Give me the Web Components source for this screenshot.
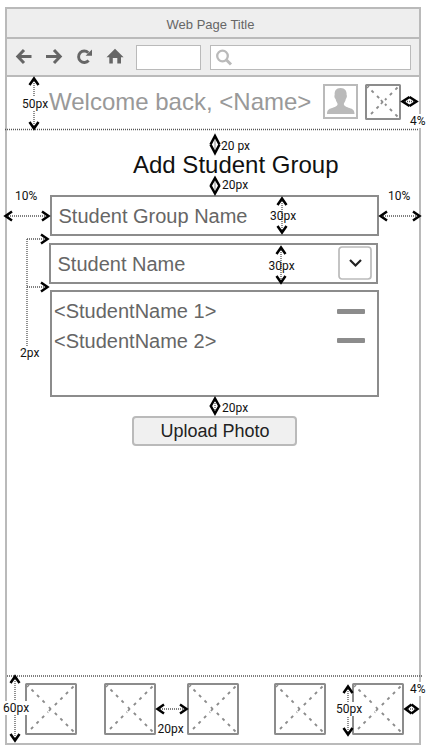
<!DOCTYPE html>
<html lang="en"><head><meta charset="utf-8"><title>Web Page Title</title>
<style>html,body{margin:0;background:#fff;width:428px;height:753px;overflow:hidden}body{position:relative;font-family:"Liberation Sans",Arial,sans-serif}</style>
</head><body>
<browser-frame page="Web Page Title">
<welcome-bar>Welcome back, &lt;Name&gt;</welcome-bar>
<group-form></group-form>
<bottom-nav></bottom-nav>
</browser-frame>
<measure-layer></measure-layer>
<script>
class Base extends HTMLElement{
  connectedCallback(){ if(!this.shadowRoot) this.attachShadow({mode:'open'}).innerHTML=this.render(); }
}
customElements.define('browser-frame',class extends Base{render(){return `<style>
:host{display:flex;flex-direction:column;box-sizing:border-box;width:416px;height:738px;margin:7px 0 0 5px;border:2px solid #bababa;background:#fff}
.title{flex:none;background:#eee;border-bottom:2px solid #bababa;display:flex;align-items:center;justify-content:center;font-size:13px;color:#666;padding:2px 5px 0 0;box-sizing:border-box;height:30px}
.bar{box-sizing:border-box;height:38px;flex:none;background:#eee;border-bottom:2px solid #bababa;display:flex;align-items:center;padding:0 8px}
.bar>svg{flex:none}
.in{box-sizing:border-box;height:25px;border:1px solid #bababa;background:#fff;flex:none}
.a{width:65px;margin:0 9px 0 9px}.b{width:201px}
.b svg{display:block}
</style><div class="title">${this.getAttribute('page')}</div>
<div class="bar"><svg width="112" height="24" viewBox="15 44.500 112 24" fill="none" stroke="#666" stroke-width="3">
<path d="M18 56H31.500M24 49.500L17.800 56L24 62.500M46 56H60M54 49.500L60.200 56L54 62.500"/>
<path d="M88.300 52.200A5.700 5.700 0 1 0 88.600 60" stroke-width="2.900"/><path d="M92 49V55.200H85.600Z" fill="#666" stroke="none"/>
<path d="M115 48.200L123.600 56.700H121V63H117.300V57.500H112.800V63H109.300V56.700H106.500Z" fill="#666" stroke="none"/></svg>
<div class="in a"></div><div class="in b"><svg width="24" height="23" viewBox="211 46 24 23" fill="none" stroke="#bababa"><circle cx="222.500" cy="56" r="5.300" stroke-width="2.300"/><path d="M226.500 60L231 64.500" stroke-width="3"/></svg></div></div><slot></slot>`}});
customElements.define('image-box',class extends Base{render(){const n=+this.getAttribute('size'),c=n/2;return `<style>:host{display:block;flex:none;width:${n}px;height:${n}px}svg{display:block}</style>
<svg width="${n}" height="${n}" fill="none" stroke="#8c8c8c"><rect x="1" y="1" width="${n-2}" height="${n-2}" rx=".5" stroke-width="2"/><path d="M2 4L4 2" stroke-width="1.500"/>
<path d="M6.500 6.500L${c-3} ${c-3}M${n-3.500} 3.500L${c+2} ${c-2}M${n-3.500} ${n-3.500}L${c+2} ${c+2}M6 ${n-6}L${c-3} ${c+3}" stroke-width="1.900" stroke-dasharray="3 4.800"/><path d="M${c-2} ${c-2}L${c-.5} ${c}L${c-2} ${c+2}" stroke-width="1.800"/></svg>`}});
customElements.define('user-avatar',class extends Base{render(){return `<style>:host{display:block;width:35px;height:35px;flex:none}svg{display:block}</style><svg width="35" height="35"><rect x="1" y="1" width="33" height="33" fill="#fff" stroke="#bababa" stroke-width="2"/><path d="M17.500 4C22 4 24 7 23.600 11C24.500 11.500 23.500 14.500 22.800 15C22.500 17.500 21 18.500 20.800 20C21 22.500 24 23 26.500 24C30 25 31.500 26.500 31.500 30H4C4 26.500 5.500 25 9 24C11.500 23 14.500 22.500 14.600 20C14.400 18.500 13 17.500 12.600 15C11.500 14.500 11 11.500 11.700 11C11.300 7 13 4 17.500 4Z" fill="#bababa"/></svg>`}});
customElements.define('welcome-bar',class extends Base{render(){return `<style>:host{display:flex;flex:none;box-sizing:border-box;height:53px;padding:7px 18px 0 42px;align-items:flex-start}
.t{font-size:24px;line-height:36px;color:#999;white-space:nowrap;width:274px;flex:none}user-avatar{margin-right:7px}</style><div class="t"><slot></slot></div><user-avatar></user-avatar><image-box size="36"></image-box>`}});
customElements.define('text-field',class extends Base{render(){return `<style>:host{display:flex;box-sizing:border-box;align-items:center;width:329px;height:41px;border:2px solid #8c8c8c;padding:1px 4px 0 6.500px;font-size:20px;color:#666;justify-content:space-between;background:#fff}</style><span><slot></slot></span><slot name="end"></slot>`}});
customElements.define('drop-button',class extends Base{render(){return `<style>:host{display:block;width:34px;height:34px;margin-top:-3px}svg{display:block}</style><svg width="34" height="34" fill="none"><rect x="1" y="1" width="32" height="32" rx="3" stroke="#bababa" stroke-width="1.700"/><path d="M12 14L17.500 19.500L23 14" stroke="#222" stroke-width="2.200"/></svg>`}});
customElements.define('student-row',class extends Base{render(){return `<style>:host{display:flex;justify-content:space-between;align-items:center;height:29.500px;font-size:20px;color:#666}i{display:block;width:28px;height:5px;border-radius:1px;background:#8c8c8c}:host(:last-child) i{margin-top:-2px}</style><span><slot></slot></span><i></i>`}});
customElements.define('group-form',class extends Base{render(){return `<style>:host{display:flex;flex-direction:column;flex:1;padding-left:43px;align-items:flex-start}
h1{margin:23px 0 18px 83px;font-size:24px;line-height:24px;font-weight:400;color:#111;height:24px}
.second{margin:7px 0 6px -1px}
.list{box-sizing:border-box;width:329px;height:107px;border:2px solid #8c8c8c;padding:5px 12px 0 2px}
button{box-sizing:border-box;width:165px;height:30px;margin:19px 0 0 82px;border:2px solid #bababa;border-radius:4px;background:#f0f0f0;font:18px "Liberation Sans",Arial,sans-serif;color:#222;padding:0 0 0 1px;white-space:nowrap}</style>
<h1>Add Student Group</h1><text-field>Student Group Name</text-field><text-field class="second">Student Name<drop-button slot="end"></drop-button></text-field>
<div class="list"><student-row>&lt;StudentName 1&gt;</student-row><student-row>&lt;StudentName 2&gt;</student-row></div><button>Upload Photo</button>`}});
customElements.define('bottom-nav',class extends Base{render(){return `<style>:host{display:grid;grid-template-columns:79px 83px 87px 78px 52px;box-sizing:border-box;height:60px;flex:none;padding-left:18px}</style>${'<image-box size="52"></image-box>'.repeat(5)}`}});
/* Spacing annotations drawn over the page: dotted rules, arrows and their labels. */
customElements.define('measure-layer',class extends Base{render(){
 const head=(x,y,dx,dy,l=8)=>{const bx=x-dx*l,by=y-dy*l,w=l<7?4:4.500;return `<path d="M${bx+dy*w} ${by+dx*w}L${x-dx*1.500} ${y-dy*1.500}L${bx-dy*w} ${by-dx*w}" fill="none" stroke="#000" stroke-width="2.500"/>`};
 const dot=(x1,y1,x2,y2)=>`<path d="M${x1} ${y1}L${x2} ${y2}" stroke="#555" stroke-width="1.300" stroke-dasharray="1 1"/>`;
 const v=(x,a,b,l)=>dot(x,a+4,x,b-4)+head(x,a,0,-1,l)+head(x,b,0,1,l);
 const h=(y,a,b,l)=>dot(a+4,y,b-4,y)+head(a,y,-1,0,l)+head(b,y,1,0,l);
 const t=(x,y,s,bg)=>`<span style="left:${x}px;top:${y}px;${bg?'background:#fff':''}">${s}</span>`;
 return `<style>:host{position:absolute;inset:0;overflow:hidden;pointer-events:none}svg{position:absolute;inset:0}span{position:absolute;font:12px/14px Roboto,"Noto Sans",sans-serif;color:#111;white-space:nowrap}</style><svg width="428" height="753">
${dot(5,129.5,419,129.5)}${dot(7,676,422,676)}
${v(34,77,130)}${v(215,134.500,154.500,10)}${v(215,176.500,195,9.500)}${v(282,197,234)}${v(281,246,284)}${v(215,397,415,9.500)}
${h(101.500,401,418,8.500)}${h(216,4,50)}${h(216,379,421)}
${dot(27,239,46,239)}${dot(27,287,46,287)}${dot(27,239,27,347)}${head(49,239,1,0)}${head(49,287,1,0)}
${v(15,675,742)}${h(709,156,188)}${v(348,685,736)}${h(709,404,419,7.500)}</svg>
${t(22,97,'50px',1)}${t(410,114,'4%',1)}${t(221,139,'20 px')}${t(222,178,'20px')}${t(15,189,'10%')}${t(388,189,'10%')}${t(270,209,'30px')}${t(268.500,259,'30px')}${t(20,346,'2px')}${t(222,401,'20px')}${t(3,701,'60px',1)}${t(157.500,722,'20px')}${t(336,702,'50px',1)}${t(410,682,'4%',1)}`}});
</script></body></html>
